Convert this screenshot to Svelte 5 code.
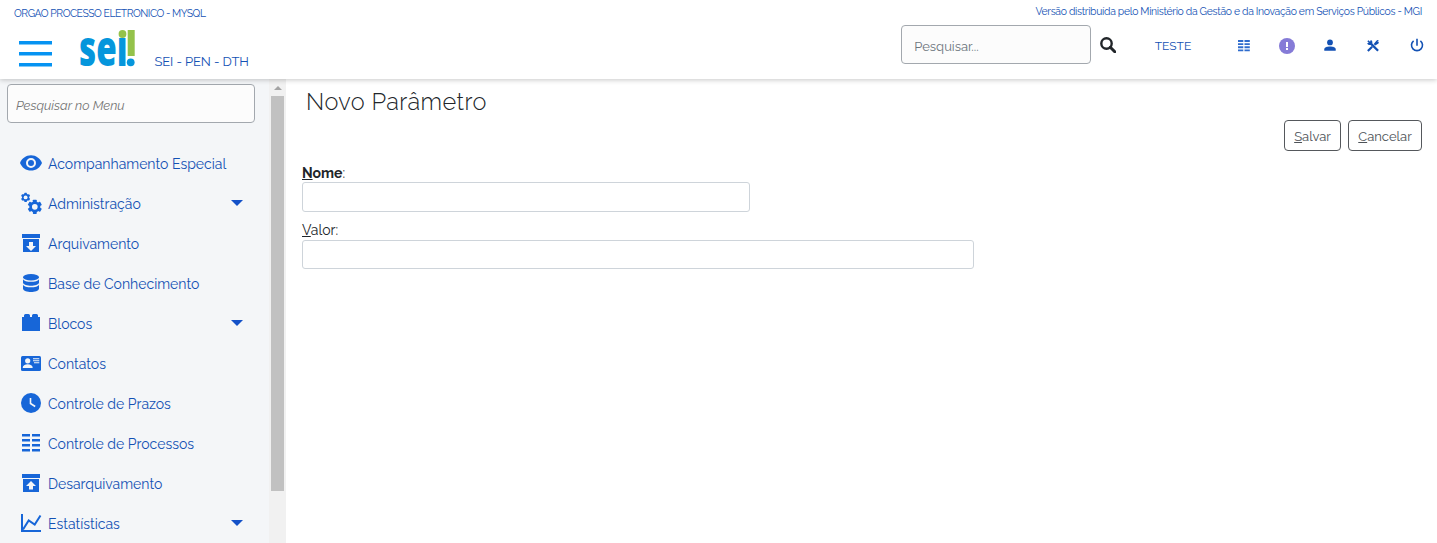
<script>
  const menu = [
    { icon: 'eye', label: 'Acompanhamento Especial' },
    { icon: 'gears', label: 'Administração', sub: true },
    { icon: 'archive', label: 'Arquivamento' },
    { icon: 'database', label: 'Base de Conhecimento' },
    { icon: 'block', label: 'Blocos', sub: true },
    { icon: 'card', label: 'Contatos' },
    { icon: 'clock', label: 'Controle de Prazos' },
    { icon: 'list', label: 'Controle de Processos' },
    { icon: 'unarchive', label: 'Desarquivamento' },
    { icon: 'chart', label: 'Estatísticas', sub: true }
  ];
</script>

{#snippet gear(x, y, r, hole)}
  <g transform="translate({x} {y}) scale({r})">
    {#each [0, 60, 120] as angle}
      <rect x="-.27" y="-1" width=".54" height="2" rx=".08" transform="rotate({angle})" />
    {/each}
    <circle r=".78" />
    <circle r={hole} fill="#f4f6f8" />
  </g>
{/snippet}

{#snippet icon(name)}
  <svg class="icon" viewBox="0 0 24 24" width="24" height="24" aria-hidden="true">
    {#if name === 'eye'}
      <path fill-rule="evenodd" d="M12 4.300C7 4.300 2.800 7.400 1 12c1.800 4.500 6 7.600 11 7.600s9.200-3.100 11-7.600C21.200 7.400 17 4.300 12 4.300ZM12 17a5 5 0 1 1 0-10 5 5 0 0 1 0 10Zm0-8a3 3 0 1 0 0 6 3 3 0 0 0 0-6Z" />
    {:else if name === 'gears'}
      {@render gear(6.6, 6.4, 4.6, 0.42)}
      {@render gear(15.8, 15.8, 7.1, 0.4)}
    {:else if name === 'archive'}
      <path fill-rule="evenodd" d="M3 3h18v4H3ZM4 8h16v13H4ZM10 11v4H7l5 5 5-5h-3v-4Z" />
    {:else if name === 'unarchive'}
      <path fill-rule="evenodd" d="M3 3h18v4H3ZM4 8h16v13H4ZM12 10l-5 5h3v3.500h4V15h3Z" />
    {:else if name === 'database'}
      <ellipse cx="12" cy="6.200" rx="8" ry="3.200" />
      <path d="M4 8c1 3.800 15 3.800 16 0v3.800c-1 4-15 4-16 0ZM4 13.500c1 3.800 15 3.800 16 0v4.300c-1 4.300-15 4.300-16 0Z" />
    {:else if name === 'block'}
      <path d="M3 6h2V4.500Q5 3 6.500 3h3Q11 3 11 4.500V6h2V4.500Q13 3 14.500 3h3Q19 3 19 4.500V6h2v14H3Z" />
    {:else if name === 'card'}
      <rect x="2" y="5" width="20" height="15" rx="1.500" />
      <g fill="#f4f6f8">
        <circle cx="8.700" cy="9.800" r="2.600" />
        <path d="M3.700 17c0-2.500 2.200-3.700 5-3.700s5 1.200 5 3.700Z" />
        <path d="M14 7.300h6.300v1H14Zm0 2h6.300v1H14Zm1 2h5.300v1H15Z" />
      </g>
    {:else if name === 'clock'}
      <circle cx="12" cy="12" r="10" />
      <path d="M11.500 7v5.500l4.700 3" fill="none" stroke="#f4f6f8" stroke-width="1.600" />
    {:else if name === 'list'}
      <path d="M3 3h8v2.600H3Zm10 0h8v2.600h-8ZM3 8h8v2.600H3Zm10 0h8v2.600h-8ZM3 13h8v2.600H3Zm10 0h8v2.600h-8ZM3 18h8v2.600H3Zm10 0h8v2.600h-8Z" />
    {:else if name === 'chart'}
      <path d="M3 3v17h19" fill="none" stroke="currentColor" stroke-width="2" />
      <path d="m4 18.500 5.700-9 6 4L21.500 4.500" fill="none" stroke="currentColor" stroke-width="2" />
    {/if}
  </svg>
{/snippet}

<header>
  <div class="identity">
    <span class="agency">ORGAO PROCESSO ELETRONICO - MYSQL</span>
    <div class="brand">
      <svg class="burger" width="33" height="26" viewBox="0 0 33 26" aria-label="Menu"><path d="M0 .1h33v3.500H0Zm0 11h33v3.500H0Zm0 11h33v3.500H0Z" /></svg>
      <svg class="logo" width="57" height="42" viewBox="0 0 57 42">
        <text x="0" y="38.300" textLength="48.500" lengthAdjust="spacingAndGlyphs">seı</text>
        <circle cx="43.500" cy="6" r="3.900" fill="#94c24a" />
        <rect x="48.700" y="2" width="7" height="26" fill="#94c24a" />
        <circle cx="51.700" cy="34.300" r="3.900" fill="#0596dc" />
      </svg>
      <span class="unit">SEI - PEN - DTH</span>
    </div>
  </div>
  <div class="actions">
    <span class="version">Versão distribuída pelo Ministério da Gestão e da Inovação em Serviços Públicos - MGI</span>
    <div class="tools">
      <input class="search" placeholder="Pesquisar..." />
      <svg class="lens" width="16" height="16" viewBox="0 0 16 16">
        <circle cx="6.500" cy="6.500" r="5.200" fill="none" stroke="#212529" stroke-width="2.400" />
        <path d="m10.300 10.300 4.500 4.500" stroke="#212529" stroke-width="3" stroke-linecap="round" />
      </svg>
      <span class="user">TESTE</span>
      <div class="shortcuts">
        <svg width="16" height="16" viewBox="0 0 16 16"><path fill="#2f6ccd" d="M2 2.100h5.300v1.900H2Zm6.500 0h5.300v1.900H8.500ZM2 5.200h5.300v1.900H2Zm6.500 0h5.300v1.900H8.500ZM2 8.300h5.300v1.900H2Zm6.500 0h5.300v1.900H8.500ZM2 11.400h5.300v1.900H2Zm6.500 0h5.300v1.900H8.500Z" /></svg>
        <svg width="16" height="16" viewBox="0 0 16 16"><circle cx="8" cy="8" r="8" fill="#857bd7" /><path d="M7 4h2v5H7Zm0 6h2v2H7Z" fill="#fff" /></svg>
        <svg width="16" height="16" viewBox="0 0 16 16"><circle cx="8" cy="4.400" r="2.900" /><path d="M2.300 12.700v-1.500c0-2 2.700-2.800 5.700-2.800s5.700.8 5.700 2.800v1.500Z" /></svg>
        <svg width="16" height="16" viewBox="0 0 16 16">
          <path d="m2.300 3.300 1.200-1 1.500 1.500.8-1.700C7.300 2.700 7.700 4.200 7.200 5.300l6.700 6.700-1.600 1.600-6.700-6.700C4 7.300 2.500 6.600 2.200 5.200l1.600-.4Z" />
          <path d="m2.100 12.200 4.300-4.300 1.500 1.500-4.300 4.300ZM8.700 6l2.700-3.300c.7-.8 1.500-.9 2.300-.4l-1.300 1.500h1.500L13.500 5.500 10.200 7.500Z" />
        </svg>
        <svg width="16" height="16" viewBox="0 0 16 16"><path class="line" d="M8 .8v7M4.600 2.800a5.500 5.500 0 1 0 6.800 0" stroke="currentColor" stroke-width="1.600" /></svg>
      </div>
    </div>
  </div>
</header>

<div class="body">
  <aside>
    <div class="panel">
      <input class="filter" placeholder="Pesquisar no Menu" />
      <nav>
        {#each menu as item}
          <a href="#menu">
            {@render icon(item.icon)}
            <span>{item.label}</span>
            {#if item.sub}<b class="caret"></b>{/if}
          </a>
        {/each}
      </nav>
    </div>
    <div class="scrollbar"><i class="up"></i><i class="thumb"></i></div>
  </aside>

  <main>
    <h1>Novo Parâmetro</h1>
    <div class="commands">
      <button class="save"><u>S</u>alvar</button>
      <button class="cancel"><u>C</u>ancelar</button>
    </div>
    <form>
      <label for="name"><strong><u>N</u>ome</strong>:</label>
      <input id="name" class="name" />
      <label for="value" class="second"><u>V</u>alor:</label>
      <input id="value" class="value" />
    </form>
  </main>
</div>

<style>
  :global(body) { margin: 0; overflow: hidden; background: #fff; }
  :global(#app) { height: 543px; display: flex; flex-direction: column; font-family: Raleway, Lato, sans-serif; color: #212529; }
  header, .body, header *, .body * { box-sizing: border-box; }
  svg { display: block; flex: none; fill: currentColor; }
  input, button { font-family: inherit; }
  input { display: block; outline: 0; }

  header { position: relative; z-index: 1; flex: none; height: 79px; display: flex; justify-content: space-between; background: #fff; color: #1351b4; box-shadow: 0 1px 5px rgba(0, 0, 0, .22); }
  .identity { padding: 7px 0 0 14px; }
  .agency { display: block; height: 13px; font-size: 10.400px; line-height: 13px; letter-spacing: -.48px; white-space: nowrap; }
  .brand { display: flex; height: 56px; padding-left: 5px; }
  .burger { margin-top: 21px; color: #0693f2; }
  .logo { margin: 8px 0 0 27px; }
  .logo text { font: 800 49px/1 "Open Sans", sans-serif; fill: #0596dc; }
  .unit { margin: 33px 0 0 18.500px; font-size: 13px; line-height: 18px; letter-spacing: -.1px; }

  .actions { display: flex; flex-direction: column; align-items: flex-end; padding: 4px 12.500px 0 0; }
  .version { height: 15px; padding-right: 2.500px; font-size: 10.400px; line-height: 15px; letter-spacing: -.32px; white-space: nowrap; }
  .tools { display: flex; align-items: center; height: 52px; }
  .search { width: 190px; height: 39px; margin: 6px 0 0; padding: 4px 11px 0 12px; border: 1px solid #a3a8ae; border-radius: 4px; background: #fcfcfc; font-size: 13px; align-self: flex-start; }
  .search::placeholder { color: #6c757d; opacity: 1; }
  .lens { margin: 0 0 0 8.500px; }
  .user { margin: 2px 44px 0 39px; width: 37px; font-size: 12px; line-height: 18px; }
  .shortcuts { display: flex; gap: 27.200px; margin-top: 1px; }
  .line { fill: none; }

  .body { flex: 1; min-height: 0; display: flex; }
  aside { width: 286px; flex: none; display: flex; background: #f4f6f8; overflow: hidden; }
  .panel { width: 269px; padding: 5px 0 0 7px; }
  .filter { width: 248px; height: 39px; padding: 3px 8px 0; border: 1px solid #a3a8ae; border-radius: 4px; background: #fcfcfc; font-size: 12.800px; font-style: italic; }
  .filter::placeholder { color: #757575; opacity: 1; }
  nav { padding-top: 20px; }
  nav a { height: 40px; display: flex; align-items: center; padding: 0 26px 0 12px; color: #1351b4; text-decoration: none; font-size: 14px; white-space: nowrap; }
  nav a span { margin-left: 5px; padding-top: 1px; }
  .icon { color: #1766d8; }
  .caret { margin: 0 0 0 auto; border: 6px solid transparent; border-top-color: #1351c8; border-bottom: 0; }
  .scrollbar { width: 17px; padding: 0 2px; background: #f1f1f1; }
  .up { display: block; width: 0; height: 4px; margin: 7px 2px 6px 3px; border: 4px solid transparent; border-top: 0; border-bottom-color: #a3a3a3; }
  .thumb { display: block; width: 13px; height: 395px; background: #c1c1c1; }

  main { flex: 1; padding: 8px 15px 0 16px; }
  h1 { margin: 0; padding-left: 4px; height: 30px; line-height: 30px; font-size: 23.500px; font-weight: 300; letter-spacing: .4px; }
  .commands { display: flex; justify-content: flex-end; gap: 7px; height: 31px; margin-top: 3px; }
  .commands button { height: 31px; padding: 1px 0 0; border: 1px solid #55585c; border-radius: 4px; background: #fff; color: #4e5358; font-size: 13px; }
  .save { width: 57px; }
  .cancel { width: 74px; }
  u { text-underline-offset: 1px; }
  form { padding-top: 11px; }
  label { display: block; height: 20px; line-height: 22px; font-size: 14px; }
  .second { margin-top: 7px; height: 21px; line-height: 23px; }
  form input { height: 30px; border: 1px solid #ced4da; border-radius: 3px; background: #fff; }
  .name { width: 448px; }
  .value { width: 672px; height: 29px; }
</style>
